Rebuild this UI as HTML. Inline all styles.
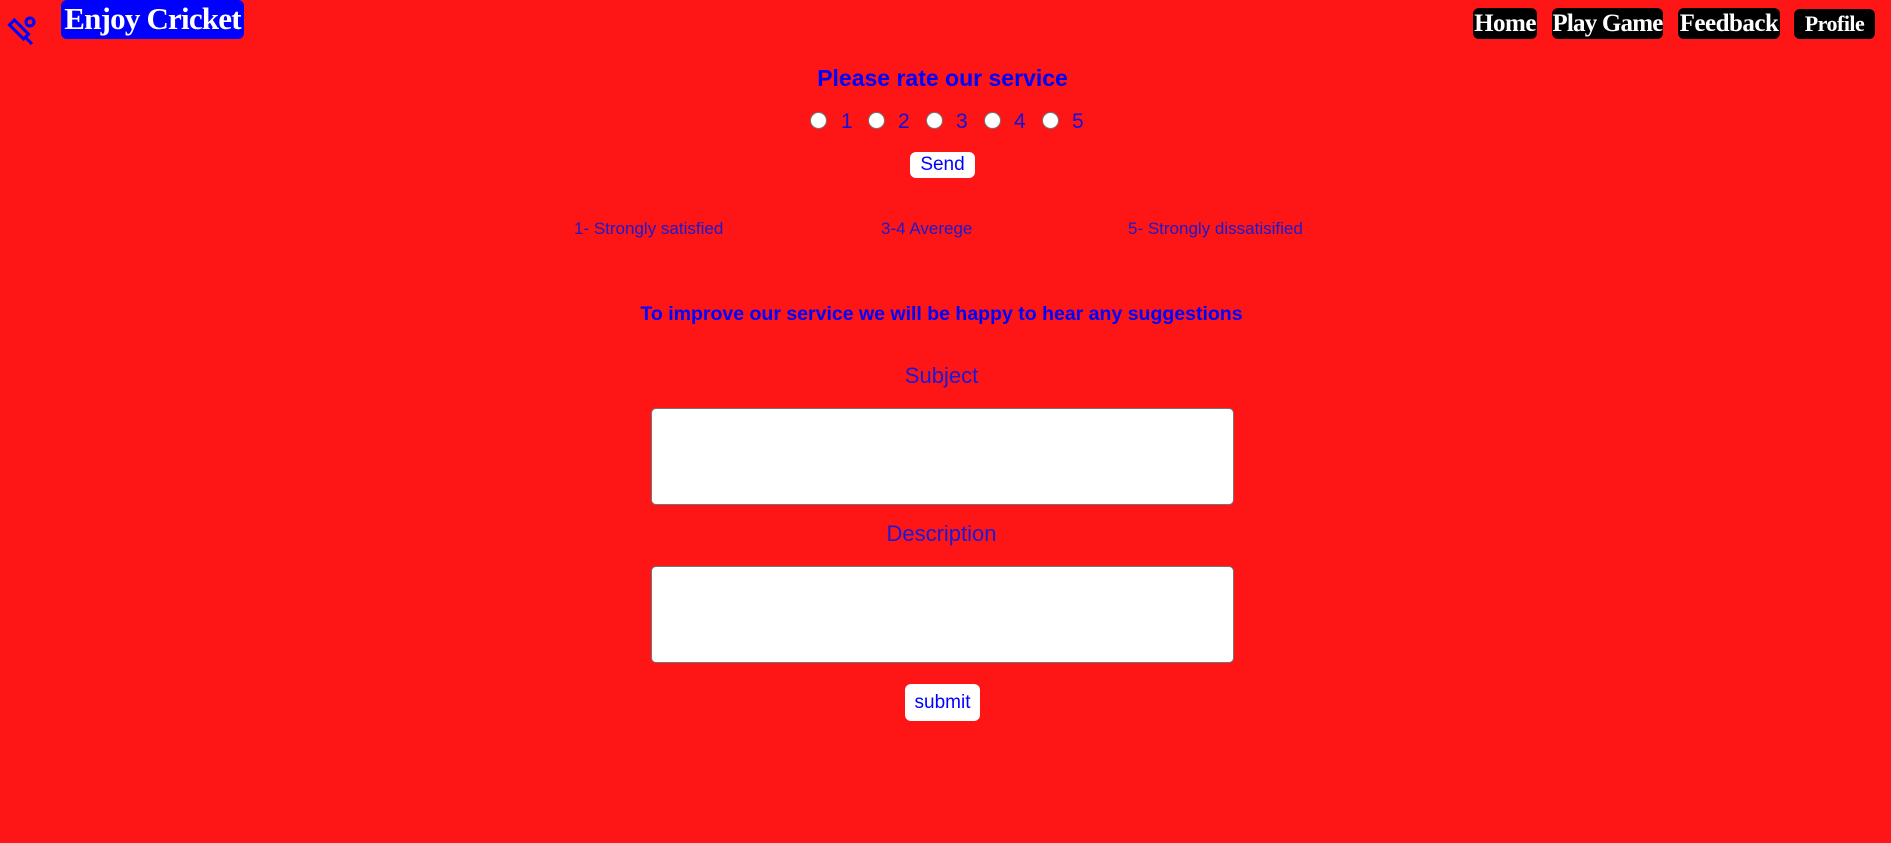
<!DOCTYPE html>
<html><head><meta charset="utf-8"><style>
*{margin:0;padding:0;box-sizing:border-box}
html,body{width:1891px;height:843px;overflow:hidden;background:#fe1515;position:relative;font-family:"Liberation Sans",sans-serif}
.a{position:absolute}
.serif{font-family:"Liberation Serif",serif;font-weight:bold;color:#fff;white-space:nowrap}
.nav{background:#000;border-radius:6px;text-align:center;font-size:25px;line-height:31px;letter-spacing:-0.5px;overflow:hidden}
.blue{color:#0000ff;white-space:nowrap}
.radio{width:17px;height:17px;border-radius:50%;background:#fff;border:1.5px solid #767676}
.num{font-size:21px;color:#1010e0;line-height:24px}
.lbl{font-size:17px;color:#1a1ad0;white-space:nowrap}
.ta{background:#fff;border:1px solid #767676;border-radius:5px;width:583px;height:97px;left:651px}
.btn{background:#fff;border-radius:6px;color:#0000ff;text-align:center}
</style></head><body>
<svg class="a" style="left:0;top:10px" width="45" height="40" viewBox="0 10 45 40">
<g fill="none" stroke="#0000ff" stroke-width="3">
<rect x="9" y="26" width="20" height="7" transform="rotate(45 19 29.5)"/>
<line x1="26" y1="38" x2="32" y2="44"/>
<circle cx="30" cy="22" r="4"/>
</g></svg>
<div class="a serif" style="left:61px;top:0;width:183px;height:39px;background:#0000ff;border-radius:6px;font-size:31px;line-height:38px;text-align:center;letter-spacing:-0.8px;overflow:hidden">Enjoy Cricket</div>
<div class="a serif nav" style="left:1473px;top:8px;width:64px">Home</div>
<div class="a serif nav" style="left:1552px;top:8px;width:111px;letter-spacing:-0.8px">Play Game</div>
<div class="a serif nav" style="left:1678px;top:8px;width:102px">Feedback</div>
<div class="a serif nav" style="left:1794px;top:9px;width:81px;font-size:22px;height:30px;line-height:30px">Profile</div>
<div class="a blue" style="left:0;width:1891px;top:64px;text-align:center;font-size:23px;font-weight:bold;line-height:28px;padding-right:6px">Please rate our service</div>
<div class="a radio" style="left:810px;top:112px"></div><div class="a num" style="left:841px;top:110px">1</div>
<div class="a radio" style="left:868px;top:112px"></div><div class="a num" style="left:898px;top:110px">2</div>
<div class="a radio" style="left:926px;top:112px"></div><div class="a num" style="left:956px;top:110px">3</div>
<div class="a radio" style="left:984px;top:112px"></div><div class="a num" style="left:1014px;top:110px">4</div>
<div class="a radio" style="left:1042px;top:112px"></div><div class="a num" style="left:1072px;top:110px">5</div>
<div class="a btn" style="left:910px;top:152px;width:65px;height:26px;font-size:19px;line-height:26px">Send</div>
<div class="a lbl" style="left:574px;top:219px">1- Strongly satisfied</div>
<div class="a lbl" style="left:881px;top:219px">3-4 Averege</div>
<div class="a lbl" style="left:1128px;top:219px">5- Strongly dissatisified</div>
<div class="a blue" style="left:0;width:1891px;top:302px;text-align:center;font-size:19.5px;font-weight:bold;line-height:24px;padding-right:8px">To improve our service we will be happy to hear any suggestions</div>
<div class="a" style="left:0;width:1891px;top:363px;text-align:center;font-size:22px;color:#1a1ad8;line-height:26px;padding-right:8px">Subject</div>
<div class="a ta" style="top:408px"></div>
<div class="a" style="left:0;width:1891px;top:521px;text-align:center;font-size:22px;color:#1a1ad8;line-height:26px;padding-right:8px">Description</div>
<div class="a ta" style="top:566px"></div>
<div class="a btn" style="left:905px;top:684px;width:75px;height:37px;font-size:19px;line-height:37px">submit</div>
</body></html>
